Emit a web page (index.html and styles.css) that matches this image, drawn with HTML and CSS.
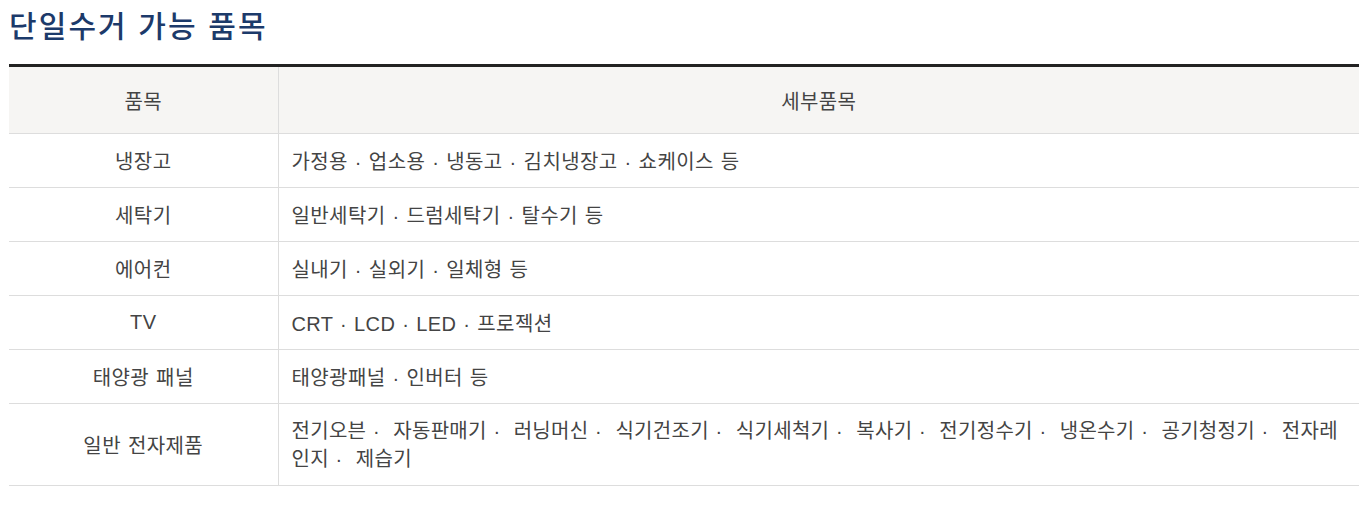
FILE: index.html
```html
<!DOCTYPE html>
<html lang="ko">
<head>
<meta charset="utf-8">
<title>단일수거 가능 품목</title>
<link rel="stylesheet" href="styles.css">
</head>
<body>
<div class="page">
  <h1 class="title">단일수거 가능 품목</h1>
  <table class="items">
    <colgroup>
      <col class="col-name">
      <col class="col-detail">
    </colgroup>
    <thead>
      <tr>
        <th>품목</th>
        <th>세부품목</th>
      </tr>
    </thead>
    <tbody>
      <tr>
        <td class="name">냉장고</td>
        <td class="detail">가정용 · 업소용 · 냉동고 · 김치냉장고 · 쇼케이스 등</td>
      </tr>
      <tr>
        <td class="name">세탁기</td>
        <td class="detail">일반세탁기 · 드럼세탁기 · 탈수기 등</td>
      </tr>
      <tr>
        <td class="name">에어컨</td>
        <td class="detail">실내기 · 실외기 · 일체형 등</td>
      </tr>
      <tr>
        <td class="name">TV</td>
        <td class="detail">CRT · LCD · LED · 프로젝션</td>
      </tr>
      <tr>
        <td class="name">태양광 패널</td>
        <td class="detail">태양광패널 · 인버터 등</td>
      </tr>
      <tr>
        <td class="name">일반 전자제품</td>
        <td class="detail multi">전기오븐 ·&nbsp; 자동판매기 ·&nbsp; 러닝머신 ·&nbsp; 식기건조기 ·&nbsp; 식기세척기 ·&nbsp; 복사기 ·&nbsp; 전기정수기 ·&nbsp; 냉온수기 ·&nbsp; 공기청정기 ·&nbsp; 전자레인지 ·&nbsp; 제습기</td>
      </tr>
    </tbody>
  </table>
</div>
</body>
</html>
```

FILE: styles.css
```css
html, body {
  margin: 0;
  padding: 0;
  background: #ffffff;
}

.page {
  padding: 0 9px;
  font-family: "Liberation Sans", "Noto Sans CJK KR", sans-serif;
}

.title {
  margin: 0;
  padding-top: 3px;
  height: 61px;
  font-size: 30px;
  line-height: 42px;
  font-weight: 500;
  color: #1c3a6a;
  letter-spacing: 2.1px;
  font-family: "Noto Sans CJK KR", sans-serif;
}

.items {
  width: 1350px;
  border-collapse: collapse;
  border-top: 3px solid #222222;
  table-layout: fixed;
  font-size: 20px;
  letter-spacing: 0.4px;
  word-spacing: 1px;
  color: #444444;
}

.col-name {
  width: 269px;
}

.items th {
  height: 66px;
  background: #f6f5f3;
  font-weight: 400;
  border-bottom: 1px solid #dddddd;
  border-left: 1px solid #dddddd;
  padding: 0;
  text-align: center;
}

.items th:first-child,
.items td:first-child {
  border-left: none;
}

.items td {
  height: 53px;
  border-bottom: 1px solid #dddddd;
  border-left: 1px solid #dddddd;
  padding: 0 13px;
  vertical-align: middle;
}

.items td.name {
  text-align: center;
  padding: 0;
}

.items td.detail {
  text-align: left;
}

.items td.multi {
  height: 81px;
  line-height: 28px;
  letter-spacing: 0.3px;
  word-spacing: 0.8px;
  padding: 0 13px 0 13px;
}
```
